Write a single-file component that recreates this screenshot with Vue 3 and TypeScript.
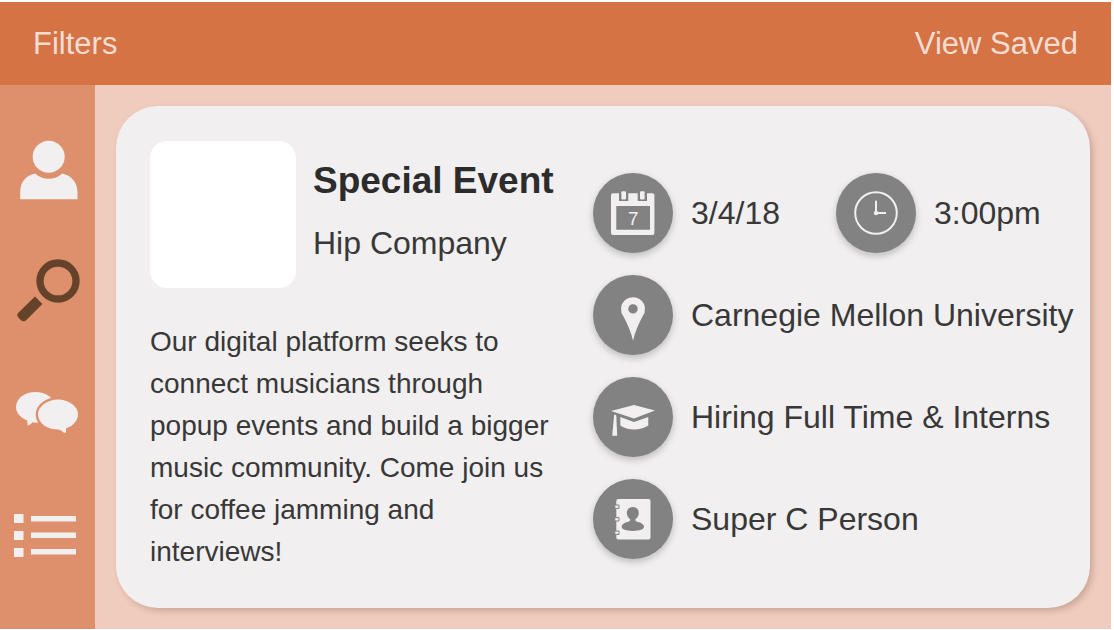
<script setup lang="ts">
import { ref } from 'vue'

type Section = 'profile' | 'search' | 'messages' | 'list'
type DetailIcon = 'date' | 'time' | 'place' | 'hiring' | 'contact'

interface Detail {
  icon: DetailIcon
  text: string
  wide: boolean
}

const sections: { id: Section; label: string }[] = [
  { id: 'profile', label: 'Profile' },
  { id: 'search', label: 'Search' },
  { id: 'messages', label: 'Messages' },
  { id: 'list', label: 'List' },
]

const details: Detail[] = [
  { icon: 'date', text: '3/4/18', wide: false },
  { icon: 'time', text: '3:00pm', wide: false },
  { icon: 'place', text: 'Carnegie Mellon University', wide: true },
  { icon: 'hiring', text: 'Hiring Full Time & Interns', wide: true },
  { icon: 'contact', text: 'Super C Person', wide: true },
]

const current = ref<Section>('search')
</script>

<template>
  <div class="page">
    <header class="topbar">
      <button type="button" class="top-action">Filters</button>
      <button type="button" class="top-action">View Saved</button>
    </header>

    <div class="body">
      <nav class="sidebar" aria-label="Sections">
        <button
          v-for="s in sections"
          :key="s.id"
          type="button"
          class="nav-button"
          :class="{ active: current === s.id }"
          :aria-label="s.label"
          @click="current = s.id"
        >
          <svg class="nav-icon" viewBox="0 0 67 66" aria-hidden="true">
            <g v-if="s.id === 'profile'">
              <circle cx="34.7" cy="19.8" r="16" />
              <path d="M6.2 62.3V55C6.2 45 12 38.5 21 36.5C25 40 29.5 41.7 34.7 41.7S44.5 40 48.3 36.5C57 38.5 63.5 45 63.5 55V62.3Z" />
            </g>
            <g v-else-if="s.id === 'search'">
              <circle class="ring" cx="44" cy="22" r="18" />
              <path d="M21 37.5L28.4 44.9L12.4 61Q9.6 63.6 7 61.2L4.6 58.8Q2 56.2 4.6 53.6Z" />
            </g>
            <g v-else-if="s.id === 'messages'">
              <ellipse cx="21.5" cy="25.9" rx="19.5" ry="15" />
              <path d="M13 37L13.8 44.8Q17 43.6 18.6 41.3Q21 42 24 41.5L26 35Z" />
              <ellipse class="gap" cx="44" cy="33.6" rx="21.3" ry="16.4" />
              <ellipse cx="44" cy="33.6" rx="20" ry="15" />
              <path d="M44 48.3Q47 49 49 51.2L52 52V47.2L54 44Z" />
            </g>
            <g v-else>
              <path d="M0 11h9.5v9H0zM0 28h9.5v9H0zM0 45h9.5v9H0zM17 13h45v5.6H17zM17 29.5h45v5.6H17zM17 46h45v5.6H17z" />
            </g>
          </svg>
        </button>
      </nav>

      <main class="content">
        <article class="card">
          <section class="summary">
            <div class="heading">
              <div class="thumb"></div>
              <div class="names">
                <h1>Special Event</h1>
                <p class="company">Hip Company</p>
              </div>
            </div>
            <p class="description">
              Our digital platform seeks to connect musicians through popup events and build a bigger
              music community. Come join us for coffee jamming and interviews!
            </p>
          </section>

          <ul class="details">
            <li v-for="d in details" :key="d.icon" class="detail" :class="{ wide: d.wide }">
              <span class="badge">
                <svg viewBox="0 0 80 80" aria-hidden="true">
                  <g v-if="d.icon === 'date'">
                    <rect x="18" y="20.3" width="43.4" height="41.7" rx="2" />
                    <path class="cut" d="M26 19H35.3V28H26ZM44.7 19H54V28H44.7ZM23.3 33H57V56.7H23.3Z" />
                    <rect x="28.4" y="18.3" width="4.6" height="8.2" rx="1" />
                    <rect x="47" y="18.3" width="4.6" height="8.2" rx="1" />
                    <text class="day" x="40.2" y="52" text-anchor="middle">7</text>
                  </g>
                  <g v-else-if="d.icon === 'time'" class="clock">
                    <circle cx="40" cy="40" r="20.8" />
                    <path d="M40 27.8V40H50" />
                    <circle class="hub" cx="40" cy="40" r="2.2" />
                  </g>
                  <g v-else-if="d.icon === 'place'">
                    <path fill-rule="evenodd" d="M40 65.8C38 57 34.5 49 30.5 41.5A12 12 0 1 1 49.5 41.5C45.5 49 42 57 40 65.8ZM40 29.2A4.7 4.7 0 1 0 40 38.6A4.7 4.7 0 1 0 40 29.2Z" />
                  </g>
                  <g v-else-if="d.icon === 'hiring'">
                    <path d="M18 34L41 28L62 33.5L41 41.5Z" />
                    <path d="M27.3 40L41 45L55.3 40V48.5Q49 52.5 41 52.5T27.3 48.5Z" />
                    <path d="M21.2 37.5L23.3 38.2L24.2 58.8H19.2Z" />
                  </g>
                  <g v-else>
                    <rect x="23.3" y="20" width="34.2" height="40.4" rx="2" />
                    <path class="spiral" d="M21.8 26H26V29.4H21.8ZM21.8 38.6H26V42H21.8ZM21.8 52H26V55.4H21.8Z" />
                    <path class="cut" d="M39.8 28C43.5 28 45.8 30.6 45.8 34C45.8 36.5 44.5 38.8 42.4 40.2C42.4 42 43 42.5 45 42.9C49 43.7 51 45.6 51 47.6C51 50.5 46.5 52 39.8 52S28.6 50.5 28.6 47.6C28.6 45.6 30.6 43.7 34.6 42.9C36.6 42.5 37.2 42 37.2 40.2C35.1 38.8 33.8 36.5 33.8 34C33.8 30.6 36.1 28 39.8 28Z" />
                  </g>
                </svg>
              </span>
              <span class="detail-text">{{ d.text }}</span>
            </li>
          </ul>
        </article>
      </main>
    </div>
  </div>
</template>

<style>
body {
  margin: 0;
  background: #fff;
}
</style>

<style scoped>
.page {
  box-sizing: border-box;
  min-height: 100vh;
  padding: 2px 3px 1px 0;
  display: flex;
  flex-direction: column;
  font-family: "Liberation Sans", Arial, sans-serif;
  font-size: 32px;
  line-height: 36px;
  color: #383838;
}

button {
  border: 0;
  padding: 0;
  margin: 0;
  background: none;
  font: inherit;
  color: inherit;
  cursor: pointer;
}

.topbar {
  display: flex;
  justify-content: space-between;
  align-items: center;
  height: 83px;
  padding: 0 33px;
  background: #d57345;
}

.top-action {
  font-size: 31px;
  color: #f3ddd3;
}

.body {
  flex: 1;
  display: flex;
}

.sidebar {
  flex: none;
  display: flex;
  flex-direction: column;
  width: 95px;
  padding-top: 24px;
  background: #de8f6b;
}

.nav-button {
  display: flex;
  justify-content: center;
  align-items: center;
  height: 122px;
  color: #f1efef;
}

.nav-button.active {
  color: #65432a;
}

.nav-icon {
  width: 67px;
  height: 66px;
  fill: currentColor;
}

.ring {
  fill: none;
  stroke: currentColor;
  stroke-width: 7.3px;
}

.gap {
  fill: #de8f6b;
  stroke: #de8f6b;
  stroke-width: 2px;
}

.content {
  flex: 1;
  display: flex;
  min-width: 0;
  padding: 21px;
  background: #f0ccbf;
}

.card {
  flex: 1;
  display: grid;
  grid-template-columns: 410px minmax(0, 1fr);
  column-gap: 33px;
  align-items: start;
  padding: 35px 0 35px 34px;
  border-radius: 42px;
  background: #f1eff0;
  box-shadow: 3px 3px 6px rgba(80, 40, 20, 0.22);
}

.heading {
  display: flex;
  gap: 17px;
}

.thumb {
  flex: none;
  width: 146px;
  height: 147px;
  border-radius: 17px;
  background: #fff;
}

.names {
  padding-top: 18px;
  white-space: nowrap;
}

h1 {
  margin: 0;
  font-size: 37px;
  line-height: 44px;
  font-weight: 700;
  color: #2c2c2c;
}

.company {
  margin: 22px 0 0;
}

.description {
  margin: 33px 0 0;
  font-size: 28px;
  line-height: 42px;
}

.details {
  display: grid;
  grid-template-columns: 243px minmax(0, 1fr);
  row-gap: 22px;
  margin: 0;
  padding: 32px 0 0;
  list-style: none;
}

.detail {
  display: flex;
  align-items: center;
  gap: 18px;
  white-space: nowrap;
}

.detail.wide {
  grid-column: 1 / -1;
}

.badge {
  flex: none;
  width: 80px;
  height: 80px;
  border-radius: 50%;
  background: #828282;
  box-shadow: 0 3px 7px rgba(0, 0, 0, 0.22);
}

.badge svg {
  display: block;
  fill: #f1eff0;
}

.cut {
  fill: #828282;
}

.day {
  font-family: "Liberation Sans", Arial, sans-serif;
  font-size: 19px;
}

.clock {
  fill: none;
  stroke: #f1eff0;
  stroke-width: 2px;
}

.hub {
  fill: #f1eff0;
  stroke: none;
}

.spiral {
  stroke: #828282;
  stroke-width: 1px;
}
</style>
